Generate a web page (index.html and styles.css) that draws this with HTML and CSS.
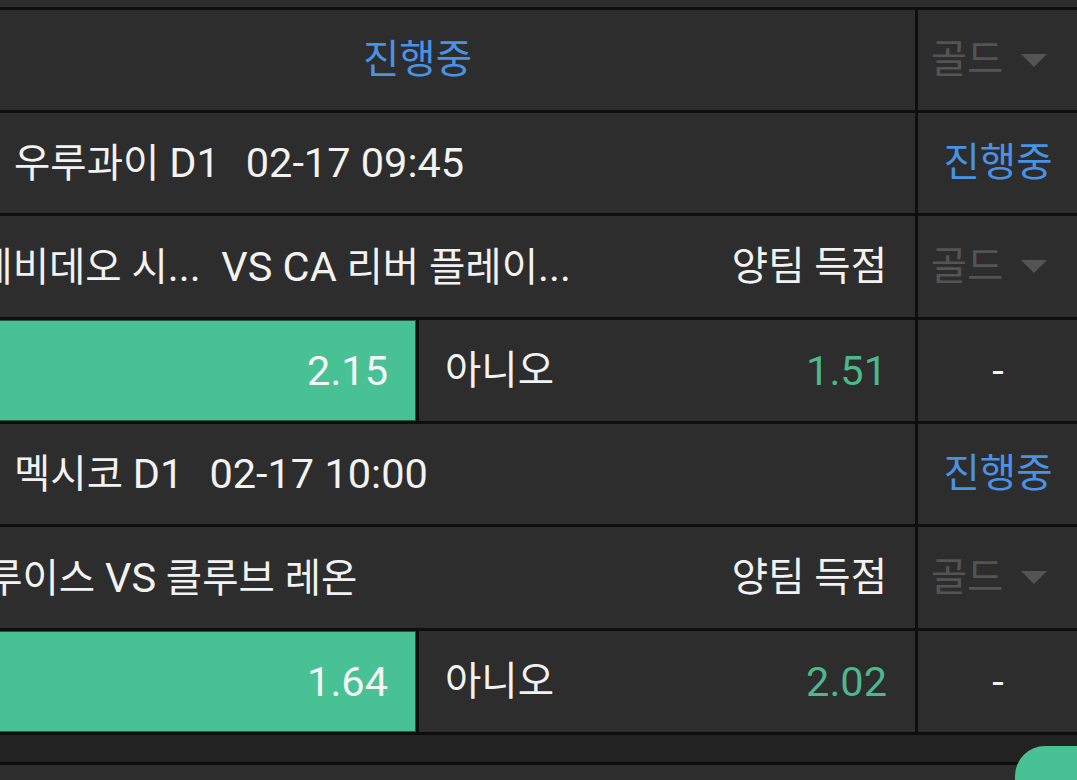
FILE: index.html
```html
<!DOCTYPE html>
<html lang="ko">
<head>
    <meta charset="UTF-8">
    <title>진행중</title>
    <link rel="stylesheet" href="styles.css">
</head>
<body>
<div class="board">
    <div class="top-edge"></div>

    <div class="row head">
        <div class="main status">진행중</div>
        <div class="side select">골드 <span class="caret"></span></div>
    </div>

    <div class="row league">
        <div class="main"><span class="name">우루과이 <span class="en">D1</span></span><span class="time en">02-17 09:45</span></div>
        <div class="side status">진행중</div>
    </div>
    <div class="row teams">
        <div class="main"><span class="match">몬테비데오 시<span class="en">...&nbsp; VS CA</span> 리버 플레이<span class="en">...</span></span><span class="market">양팀 득점</span></div>
        <div class="side select">골드 <span class="caret"></span></div>
    </div>
    <div class="row odds">
        <div class="main">
            <div class="pick on"><span class="val en">2.15</span></div>
            <div class="pick"><span class="label">아니오</span><span class="val en">1.51</span></div>
        </div>
        <div class="side en">-</div>
    </div>

    <div class="row league">
        <div class="main"><span class="name">멕시코 <span class="en">D1</span></span><span class="time en">02-17 10:00</span></div>
        <div class="side status">진행중</div>
    </div>
    <div class="row teams">
        <div class="main"><span class="match">산 루이스 <span class="en">VS</span> 클루브 레온</span><span class="market">양팀 득점</span></div>
        <div class="side select">골드 <span class="caret"></span></div>
    </div>
    <div class="row odds">
        <div class="main">
            <div class="pick on"><span class="val en">1.64</span></div>
            <div class="pick"><span class="label">아니오</span><span class="val en">2.02</span></div>
        </div>
        <div class="side en">-</div>
    </div>

    <div class="band"></div>
    <div class="rest"></div>
</div>
<a href="javascript:;" class="fab"></a>
</body>
</html>
```

FILE: styles.css
```css
@charset "UTF-8";
/* reset */
*{box-sizing:border-box}
body,div,span{margin:0;padding:0}
body{
    font:39.5px/1.2 Roboto, "Noto Sans CJK KR", sans-serif;
    color:#f2f2f2;
    background:#0e0e0e;
    overflow:hidden;
    height:780px;
}
a{text-decoration:none}
.en{font-size:41.5px;}

/* table is scrolled 80px to the left */
.board{
    width:1158px;
    margin-left:-80px;
    display:flex;
    flex-direction:column;
    gap:3px;
    background:#0e0e0e;
}
.top-edge{
    height:7px;
    background:#2d2d2d;
}
.row{
    display:flex;
    gap:3px;
    height:100px;
}
.row.teams,.row.odds{height:101px;}
.main,.side{
    background:#2d2d2d;
    display:flex;
    align-items:center;
}
.main{
    flex:none;
    width:995px;
    overflow:hidden;
    white-space:nowrap;
}
.side{
    flex:none;
    width:160px;
    justify-content:center;
    white-space:nowrap;
}

.status{color:#4a92e4;}
.head .main{justify-content:center;}

.select{
    color:#545454;
    padding-right:18px;
}
.caret{
    width:0;
    height:0;
    border-left:13px solid transparent;
    border-right:13px solid transparent;
    border-top:13px solid #545454;
    margin-left:18px;
}

.league .main{padding-left:94px;}
.league .time{margin-left:26px;}

.teams .main{
    padding:0 28px 0 20px;
    justify-content:space-between;
}

.odds .main{
    gap:3px;
    background:#0e0e0e;
    align-items:stretch;
}
.pick{
    flex:1;
    background:#2d2d2d;
    display:flex;
    align-items:center;
    justify-content:space-between;
    padding:0 28px 0 26px;
}
.pick.on{
    background:#48c295;
    justify-content:flex-end;
    box-shadow:inset 0 0 0 1px #1f5a44;
}
.pick .val{color:#4cb88c;}
.pick.on .val{color:#f5f5f5;}

.band{
    height:27px;
    background:#222;
}
.rest{
    height:20px;
    background:#2d2d2d;
}

.fab{
    position:fixed;
    left:1015px;
    top:746px;
    width:120px;
    height:120px;
    border-radius:30px;
    background:#48c295;
}
```
